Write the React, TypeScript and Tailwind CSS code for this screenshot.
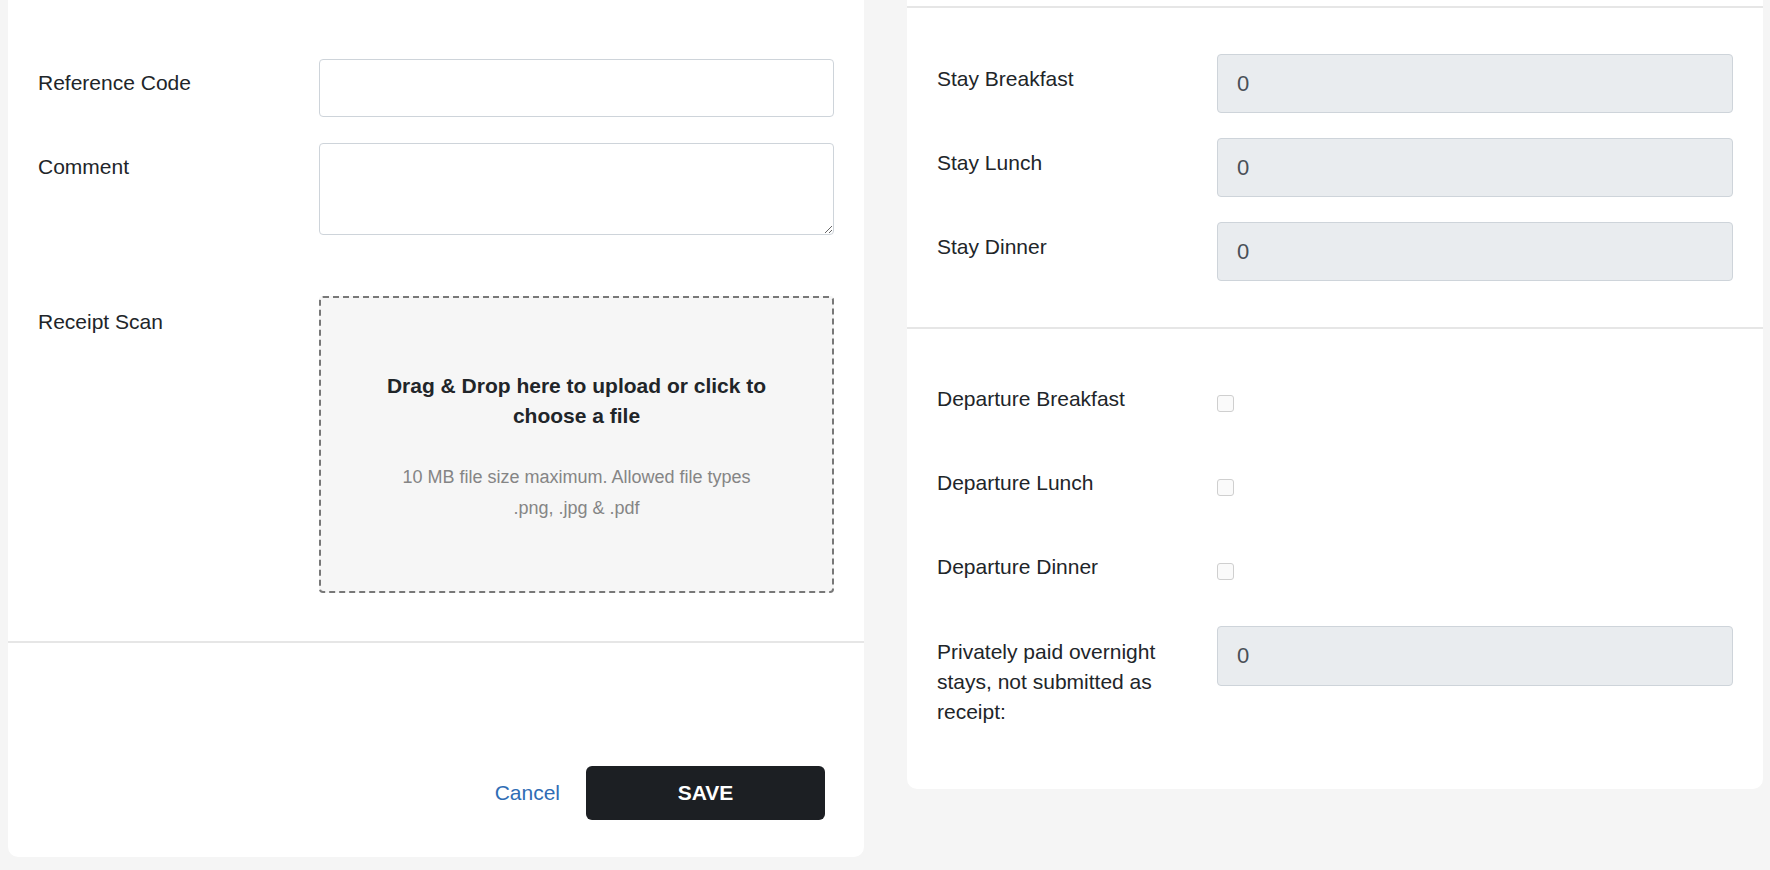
import { useState } from 'react';

const LABEL = 'text-[21px] leading-[30px] text-[#212529]';

function TextRow({ label, value }: { label: string; value: string }) {
  return (
    <div className="flex">
      <div className={`w-[280px] shrink-0 pt-[10px] pr-[15px] ${LABEL}`}>{label}</div>
      <input
        disabled
        value={value}
        readOnly
        className="h-[59px] flex-1 rounded-[4px] border border-[#ced4da] bg-[#e9ecef] pl-[19px] text-[22px] text-[#495057] outline-none"
      />
    </div>
  );
}

function CheckRow({ label }: { label: string }) {
  const [checked, setChecked] = useState(false);
  return (
    <div className="flex h-[59px]">
      <div className={`w-[280px] shrink-0 pt-[10px] pr-[15px] ${LABEL}`}>{label}</div>
      <div className="flex items-center">
        <input
          type="checkbox"
          checked={checked}
          onChange={(e) => setChecked(e.target.checked)}
          className="h-[17px] w-[17px] appearance-none rounded-[3px] border border-[#cfcfcf] bg-[#fafafa]"
        />
      </div>
    </div>
  );
}

export default function App() {
  return (
    <div className="flex min-h-[870px] items-start gap-[43px] bg-[#f5f5f5] pl-2 pr-[7px] font-['Liberation_Sans',Arial,sans-serif]">
      {/* left card: receipt form */}
      <div className="w-[856px] shrink-0 rounded-b-[10px] bg-white">
        <div className="px-[30px] pt-[59px]">
          <div className="flex">
            <label className={`w-[281px] shrink-0 pt-[9px] ${LABEL}`}>Reference Code</label>
            <input className="h-[58px] flex-1 rounded-[4px] border border-[#ced4da] px-3 text-[20px] outline-none" />
          </div>

          <div className="mt-[26px] flex">
            <label className={`w-[281px] shrink-0 pt-[9px] ${LABEL}`}>Comment</label>
            <textarea className="block h-[92px] flex-1 rounded-[4px] border border-[#ced4da] px-3 text-[20px] outline-none" />
          </div>

          <div className="mt-[61px] flex">
            <label className={`w-[281px] shrink-0 pt-[11px] ${LABEL}`}>Receipt Scan</label>
            <div className="flex h-[297px] flex-1 cursor-pointer flex-col items-center justify-center rounded-[4px] border-2 border-dashed border-[#787878] bg-[#f6f6f6] pt-[5px] text-center">
              <p className="w-[405px] text-[21px] font-bold leading-[30px] text-[#212529]">
                Drag &amp; Drop here to upload or click to choose a file
              </p>
              <p className="mt-[31px] w-[380px] text-[18px] leading-[31px] text-[#858585]">
                10 MB file size maximum. Allowed file types .png, .jpg &amp; .pdf
              </p>
            </div>
          </div>
        </div>

        <div className="mt-[48px] border-t-2 border-[#e6e6e6]" />

        <div className="flex items-center justify-end gap-[26px] pb-[37px] pr-[39px] pt-[123px]">
          <button className="text-[21px] text-[#2f6db5]">Cancel</button>
          <button className="h-[54px] w-[239px] rounded-[6px] bg-[#1c1f23] text-[21px] font-bold text-white">
            SAVE
          </button>
        </div>
      </div>

      {/* right card: meals */}
      <div className="w-[856px] shrink-0 rounded-b-[10px] bg-white">
        <div className="h-[8px] border-b-2 border-[#e6e6e6]" />

        <div className="flex flex-col gap-[25px] border-b-2 border-[#e6e6e6] px-[30px] pb-[46px] pt-[46px]">
          <TextRow label="Stay Breakfast" value="0" />
          <TextRow label="Stay Lunch" value="0" />
          <TextRow label="Stay Dinner" value="0" />
        </div>

        <div className="flex flex-col gap-[25px] px-[30px] pb-[62px] pt-[45px]">
          <CheckRow label="Departure Breakfast" />
          <CheckRow label="Departure Lunch" />
          <CheckRow label="Departure Dinner" />
          <div className="flex">
            <div className={`w-[280px] shrink-0 pr-[15px] pt-[11px] ${LABEL}`}>
              Privately paid overnight stays, not submitted as receipt:
            </div>
            <input
              disabled
              readOnly
              value="0"
              className="h-[60px] flex-1 rounded-[4px] border border-[#ced4da] bg-[#e9ecef] pl-[19px] text-[22px] text-[#495057] outline-none"
            />
          </div>
        </div>
      </div>
    </div>
  );
}
